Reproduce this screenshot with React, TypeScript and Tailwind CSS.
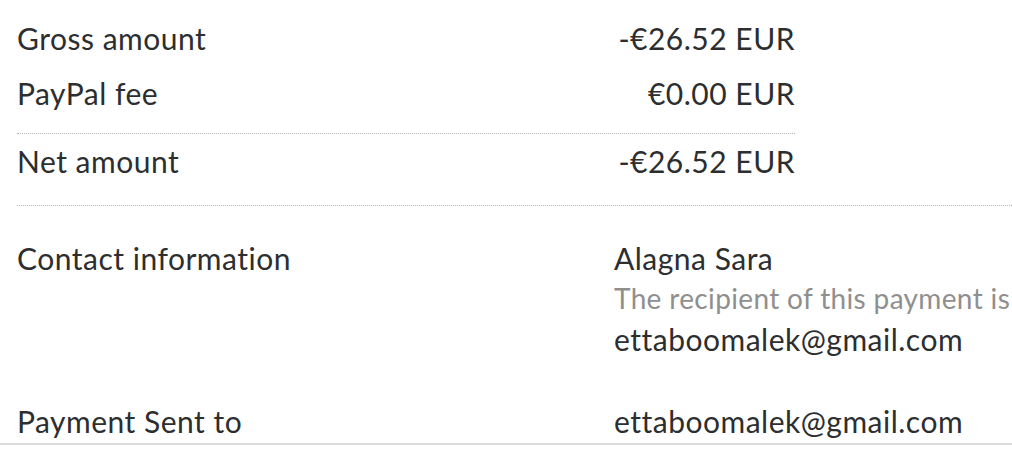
import React from "react";

const rows = [
  { label: "Gross amount", value: "-€26.52 EUR" },
  { label: "PayPal fee", value: "€0.00 EUR" },
];

const App = () => {
  return (
    <div className="w-[1012px] h-[454px] overflow-hidden bg-white text-[#2c2e2f] text-[30px] tracking-[0.5px] font-['Lato',sans-serif]">
      <div className="pl-[17px] pt-[11px]">
        <div className="w-[778px]">
          {rows.map((r) => (
            <div key={r.label} className="flex justify-between leading-[55px]">
              <span>{r.label}</span>
              <span>{r.value}</span>
            </div>
          ))}
          <div className="mt-[12px] border-t border-dotted border-[#b5b5b5]" />
          <div className="flex justify-between leading-[55px]">
            <span>Net amount</span>
            <span>-€26.52 EUR</span>
          </div>
        </div>
        <div className="mt-[16px] border-t border-dotted border-[#b5b5b5]" />
        <div className="pt-[32px] flex leading-[40px]">
          <div className="w-[597px] shrink-0">Contact information</div>
          <div className="whitespace-nowrap">
            <div>Alagna Sara</div>
            <div className="text-[#8f8f8f] text-[28px] tracking-[0.35px]">The recipient of this payment is</div>
            <div className="leading-[43px]">ettaboomalek@gmail.com</div>
          </div>
        </div>
        <div className="pt-[40px] flex leading-[40px]">
          <div className="w-[597px] shrink-0">Payment Sent to</div>
          <div className="whitespace-nowrap">ettaboomalek@gmail.com</div>
        </div>
      </div>
      <div className="mt-[2px] border-t-2 border-[#dcdcdc]" />
    </div>
  );
};

export default App;
